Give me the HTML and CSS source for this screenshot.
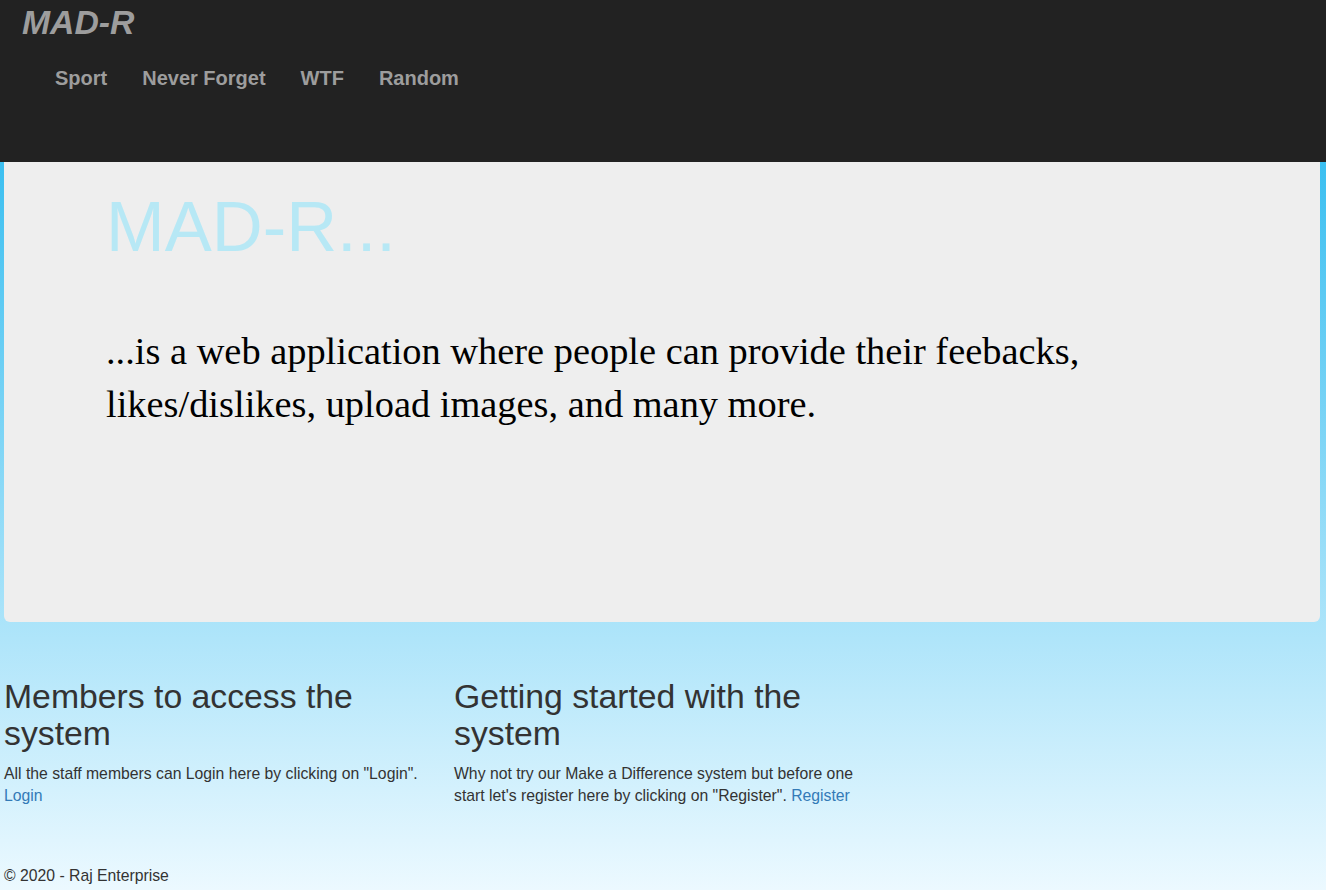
FILE: index.html
```html
<!DOCTYPE html>
<html>
<head>
<meta charset="utf-8">
<title>MAD-R</title>
<link rel="stylesheet" href="styles.css">
</head>
<body>
<header class="topbar">
  <div class="brand">MAD-R</div>
  <nav class="nav">
    <a href="#">Sport</a>
    <a href="#">Never Forget</a>
    <a href="#">WTF</a>
    <a href="#">Random</a>
  </nav>
</header>
<main class="page">
  <section class="jumbotron">
    <h1 class="jumbo-title">MAD-R...</h1>
    <p class="lead">...is a web application where people can provide their feebacks, likes/dislikes, upload images, and many more.</p>
  </section>
  <section class="cols">
    <div class="col">
      <h2>Members to access the system</h2>
      <p>All the staff members can Login here by clicking on "Login". <a href="#">Login</a></p>
    </div>
    <div class="col">
      <h2>Getting started with the system</h2>
      <p>Why not try our Make a Difference system but before one start let's register here by clicking on "Register". <a href="#">Register</a></p>
    </div>
  </section>
  <footer class="footer">© 2020 - Raj Enterprise</footer>
</main>
</body>
</html>
```

FILE: styles.css
```css
html, body {
  margin: 0;
  padding: 0;
}
body {
  min-height: 890px;
  background: linear-gradient(to bottom, rgb(20,178,237) 0px, rgb(236,249,255) 890px);
  font-family: "Liberation Sans", Arial, sans-serif;
  color: #333;
}
.topbar {
  background: #222;
  height: 162px;
  box-sizing: border-box;
  padding: 3px 0 0 22px;
}
.brand {
  font-family: "Liberation Sans", Arial, sans-serif;
  font-style: italic;
  font-weight: bold;
  font-size: 33.75px;
  line-height: 38px;
  color: #9d9d9d;
}
.nav {
  display: flex;
  padding: 25px 0 0 15.5px;
}
.nav a {
  color: #9d9d9d;
  text-decoration: none;
  font-weight: bold;
  font-size: 20px;
  line-height: 24px;
  padding: 0 17.5px;
}
.page {
  padding: 0 6px 0 4px;
}
.jumbotron {
  background: #eee;
  border-radius: 0 0 6px 6px;
  height: 460px;
  box-sizing: border-box;
  padding: 26px 102px 0 102px;
}
.jumbo-title {
  margin: 0;
  font-family: "Liberation Sans", Arial, sans-serif;
  font-weight: normal;
  font-size: 70.5px;
  line-height: 78px;
  color: #b7e8f5;
}
.lead {
  margin: 59px 0 0 0;
  font-family: "Liberation Serif", "Times New Roman", serif;
  font-size: 38.4px;
  line-height: 53px;
  color: #000;
  max-width: 1000px;
}
.cols {
  display: grid;
  grid-template-columns: 420px 420px;
  column-gap: 30px;
  padding-top: 56px;
}
.col h2 {
  margin: 0 0 11px 0;
  font-weight: normal;
  font-size: 33.75px;
  line-height: 37px;
  color: #333;
}
.col p {
  margin: 0;
  font-size: 15.75px;
  line-height: 22px;
}
.col a {
  color: #337ab7;
  text-decoration: none;
}
.footer {
  margin-top: 58px;
  font-size: 15.75px;
  line-height: 22px;
  color: #333;
}
```
